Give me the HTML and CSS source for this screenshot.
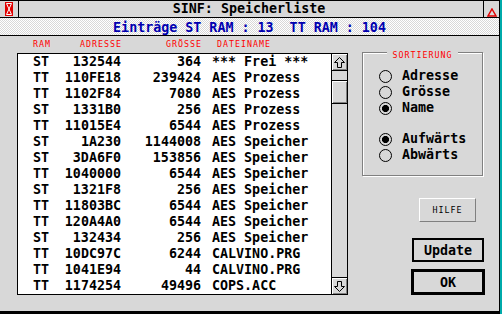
FILE: index.html
```html
<!DOCTYPE html>
<html lang="de">
<head>
    <meta charset="UTF-8">
    <title>SINF: Speicherliste</title>
    <link rel="stylesheet" href="styles.css">
</head>
<body>
    <div class="window">
        <div class="titlebar">
            <div class="closer">
                <svg width="8" height="14" viewBox="0 0 8 14">
                    <rect width="8" height="14" fill="#e00000"/>
                    <path d="M1.5 1.5H6.5L1.5 12.5H6.5Z" fill="none" stroke="#fff" stroke-width="1"/>
                </svg>
            </div>
            <div class="title">SINF: Speicherliste</div>
            <div class="fuller">
                <svg width="10" height="9" viewBox="0 0 10 9">
                    <path d="M5 1L9 8H1Z" fill="none" stroke="#e00000" stroke-width="1.5"/>
                </svg>
            </div>
        </div>
        <div class="info">Einträge ST RAM : 13  TT RAM : 104</div>

        <div class="work">
            <div class="files">
                <div class="cols small">
                    <span>RAM</span>
                    <span class="r">ADRESSE</span>
                    <span class="r">GRÖSSE</span>
                    <span class="n">DATEINAME</span>
                </div>
                <div class="list">
                    <div class="rows">
                        <div class="row"><span>ST</span><span class="r">132544</span><span class="r">364</span><span class="n">*** Frei ***</span></div>
                        <div class="row"><span>TT</span><span class="r">110FE18</span><span class="r">239424</span><span class="n">AES Prozess</span></div>
                        <div class="row"><span>TT</span><span class="r">1102F84</span><span class="r">7080</span><span class="n">AES Prozess</span></div>
                        <div class="row"><span>ST</span><span class="r">1331B0</span><span class="r">256</span><span class="n">AES Prozess</span></div>
                        <div class="row"><span>TT</span><span class="r">11015E4</span><span class="r">6544</span><span class="n">AES Prozess</span></div>
                        <div class="row"><span>ST</span><span class="r">1A230</span><span class="r">1144008</span><span class="n">AES Speicher</span></div>
                        <div class="row"><span>ST</span><span class="r">3DA6F0</span><span class="r">153856</span><span class="n">AES Speicher</span></div>
                        <div class="row"><span>TT</span><span class="r">1040000</span><span class="r">6544</span><span class="n">AES Speicher</span></div>
                        <div class="row"><span>ST</span><span class="r">1321F8</span><span class="r">256</span><span class="n">AES Speicher</span></div>
                        <div class="row"><span>TT</span><span class="r">11803BC</span><span class="r">6544</span><span class="n">AES Speicher</span></div>
                        <div class="row"><span>TT</span><span class="r">120A4A0</span><span class="r">6544</span><span class="n">AES Speicher</span></div>
                        <div class="row"><span>ST</span><span class="r">132434</span><span class="r">256</span><span class="n">AES Speicher</span></div>
                        <div class="row"><span>TT</span><span class="r">10DC97C</span><span class="r">6244</span><span class="n">CALVINO.PRG</span></div>
                        <div class="row"><span>TT</span><span class="r">1041E94</span><span class="r">44</span><span class="n">CALVINO.PRG</span></div>
                        <div class="row"><span>TT</span><span class="r">1174254</span><span class="r">49496</span><span class="n">COPS.ACC</span></div>
                    </div>
                    <div class="scroll">
                        <div class="arrow up">
                            <svg width="11" height="11" viewBox="0 0 11 11">
                                <path d="M5.5 0.5L10.5 5.5H7.5V10.5H3.5V5.5H0.5Z" fill="none" stroke="#000"/>
                            </svg>
                        </div>
                        <div class="track"><div class="thumb"></div></div>
                        <div class="arrow down">
                            <svg width="11" height="11" viewBox="0 0 11 11">
                                <path d="M5.5 10.5L10.5 5.5H7.5V0.5H3.5V5.5H0.5Z" fill="none" stroke="#000"/>
                            </svg>
                        </div>
                    </div>
                </div>
            </div>

            <div class="side">
                <div class="sort">
                    <div class="legend small">SORTIERUNG</div>
                    <div class="opts">
                        <div class="opt"><span class="dot"></span>Adresse</div>
                        <div class="opt"><span class="dot"></span>Grösse</div>
                        <div class="opt"><span class="dot on"></span>Name</div>
                        <div class="opt gap"><span class="dot on"></span>Aufwärts</div>
                        <div class="opt"><span class="dot"></span>Abwärts</div>
                    </div>
                </div>
                <button class="help small">HILFE</button>
                <button class="btn update">Update</button>
                <button class="btn ok">OK</button>
            </div>
        </div>
    </div>
</body>
</html>
```

FILE: styles.css
```css
body {
    margin: 0;
    background-color: #00aaaa;
    font-family: "DejaVu Sans Mono", monospace;
    font-weight: bold;
    font-size: 13.33px;
    color: #000;
}

.small {
    font-family: "DejaVu Sans Mono", monospace;
    font-size: 8.3px;
    font-weight: normal;
    letter-spacing: 1px;
}

.window {
    width: 499px;
    border-right: 1px solid #000;
    border-bottom: 3px solid #000;
    background-color: #d8d8d8;
}

.titlebar {
    display: flex;
    height: 16px;
    border-top: 1px solid #000;
    border-bottom: 1px solid #000;
}

.closer {
    width: 18px;
    border-right: 1px solid #000;
    display: flex;
    align-items: center;
    justify-content: center;
}

.title {
    flex: 1;
    text-align: center;
    line-height: 16px;
    padding-right: 4px;
}

.fuller {
    width: 16px;
    border-left: 1px solid #000;
    display: flex;
    justify-content: center;
    align-items: flex-start;
    padding-top: 7px;
    box-sizing: border-box;
}

.fuller svg {
    display: block;
}

.info {
    height: 17px;
    line-height: 20px;
    border-bottom: 1px solid #000;
    text-align: center;
    white-space: pre;
    color: #0000b0;
    background: repeating-conic-gradient(#fff 0 25%, #d8d8d8 0 50%) 0 0 / 2px 2px;
}

.work {
    display: flex;
    height: 275px;
    padding-left: 17px;
}

.files {
    width: 331px;
}

.cols {
    display: grid;
    grid-template-columns: 16px 72px 80px 1fr;
    height: 17px;
    line-height: 16px;
    padding-left: 16px;
    color: #ff0000;
    white-space: nowrap;
}

.cols .r {
    text-align: right;
    margin-right: -1px;
}

.cols .n {
    padding-left: 16px;
}

.list {
    display: flex;
    height: 240px;
    border: 1px solid #000;
    background-color: #fff;
}

.rows {
    flex: 1;
}

.row {
    display: grid;
    grid-template-columns: 16px 72px 80px 1fr;
    padding-left: 15px;
    height: 16px;
    line-height: 16px;
    white-space: pre;
}

.row .r {
    text-align: right;
}

.row .n {
    padding-left: 11px;
}

.scroll {
    width: 15px;
    border-left: 1px solid #000;
    display: flex;
    flex-direction: column;
    background-color: #d8d8d8;
}

.arrow {
    height: 16px;
    display: flex;
    align-items: center;
    justify-content: center;
    box-shadow: inset 1px 1px #fff, inset -1px -1px #808080;
}

.arrow svg {
    display: block;
}

.arrow.up {
    border-bottom: 1px solid #000;
}

.arrow.down {
    border-top: 1px solid #000;
}

.track {
    flex: 1;
}

.thumb {
    margin-top: 9px;
    height: 22px;
    border-top: 1px solid #000;
    border-bottom: 1px solid #000;
    box-shadow: inset 1px 1px #fff, inset -1px -1px #808080;
}

.side {
    width: 123px;
    margin-left: 14px;
    display: flex;
    flex-direction: column;
    align-items: flex-end;
}

.sort {
    align-self: flex-start;
    width: 121px;
    box-sizing: border-box;
    margin-top: 16px;
    padding-bottom: 12px;
    border: 1px solid #808080;
    box-shadow: inset 1px 1px #fff, 1px 1px #fff;
}

.legend {
    width: fit-content;
    margin: -2px auto 9px;
    padding: 0 6px;
    line-height: 8px;
    color: #ff0000;
    background-color: #d8d8d8;
}

.opts {
    padding-left: 16px;
}

.opt {
    display: flex;
    align-items: center;
    gap: 10px;
    height: 16px;
    line-height: 16px;
}

.opt.gap {
    margin-top: 15px;
}

.dot {
    width: 11px;
    height: 11px;
    border: 1px solid #000;
    border-radius: 50%;
}

.dot.on {
    background: radial-gradient(circle, #000 0 3.3px, transparent 3.8px);
}

button {
    padding: 0;
    color: #000;
    background-color: #d8d8d8;
    cursor: pointer;
}

.help {
    width: 57px;
    height: 24px;
    margin: 22px 9px 0 0;
    border: 1px solid;
    border-color: #fff #808080 #808080 #fff;
}

.btn {
    font: inherit;
    width: 72px;
    height: 24px;
    border: 2px solid #000;
}

.update {
    margin: 16px 1px 0 0;
}

.ok {
    width: 74px;
    height: 26px;
    border-width: 3px;
    margin-top: 7px;
}
```
